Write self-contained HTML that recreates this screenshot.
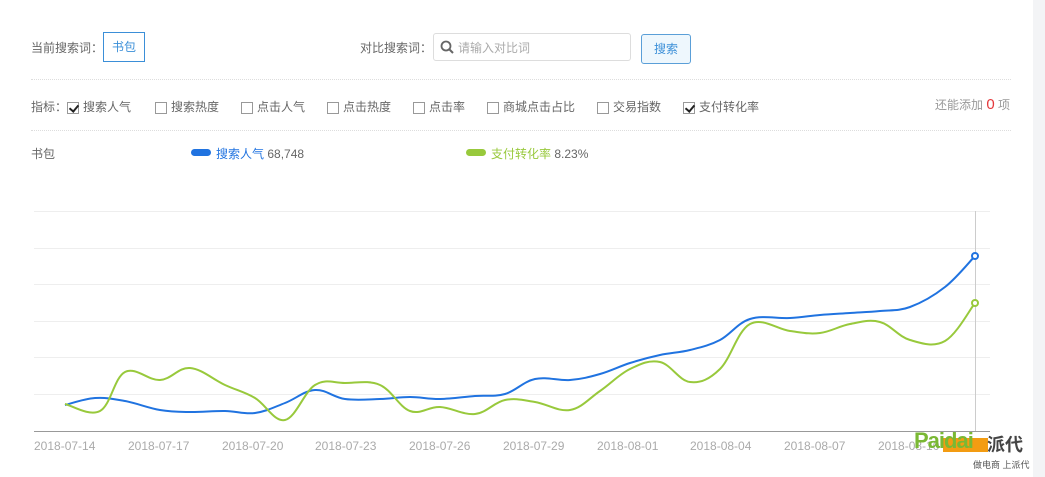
<!DOCTYPE html>
<html><head><meta charset="utf-8"><style>
body{margin:0;width:1045px;height:477px;background:#fff;font-family:"Liberation Sans","Noto Sans CJK SC",sans-serif;font-size:12px;color:#666;position:relative;overflow:hidden}
.a{position:absolute;white-space:nowrap}
.cb{display:inline-block;width:12px;height:12px;border:1px solid #999;vertical-align:-3px;margin-right:4px;background:#fff;position:relative;box-sizing:border-box}
.cb.on:after{content:"";position:absolute;left:3px;top:0px;width:4px;height:7px;border:solid #222;border-width:0 2px 2px 0;transform:rotate(40deg)}
.dash{position:absolute;left:31px;width:980px;border-top:1px dotted #ddd}
.gl{position:absolute;left:34px;width:956px;border-top:1px solid #eee}
</style></head><body>
<div class="a" style="left:1033px;top:0;width:12px;height:477px;background:#f3f4f6"></div>
<div class="a" style="left:31px;top:39px">当前搜索词：</div>
<div class="a" style="left:103px;top:32px;width:40px;height:28px;border:1px solid #3b8fd8;color:#3b8fd8;line-height:28px;text-align:center">书包</div>
<div class="a" style="left:360px;top:39px">对比搜索词：</div>
<div class="a" style="left:433px;top:33px;width:198px;height:28px;border:1px solid #ddd;border-radius:3px;color:#aaa;line-height:28px;box-sizing:border-box;padding-left:24px">请输入对比词</div>
<svg class="a" style="left:440px;top:40px" width="14" height="14"><circle cx="6" cy="6" r="4.5" fill="none" stroke="#666" stroke-width="1.8"/><line x1="9" y1="9" x2="13" y2="13" stroke="#666" stroke-width="2"/></svg>
<div class="a" style="left:641px;top:34px;width:48px;height:28px;border:1px solid #5a9fd8;border-radius:3px;background:#eef7fd;color:#3b8fd8;line-height:28px;text-align:center">搜索</div>
<div class="dash" style="top:79px"></div>
<div class="a" style="left:31px;top:98px">指标：<span class="cb on"></span>搜索人气</div>
<div class="a" style="left:155px;top:98px"><span class="cb"></span>搜索热度</div>
<div class="a" style="left:241px;top:98px"><span class="cb"></span>点击人气</div>
<div class="a" style="left:327px;top:98px"><span class="cb"></span>点击热度</div>
<div class="a" style="left:413px;top:98px"><span class="cb"></span>点击率</div>
<div class="a" style="left:487px;top:98px"><span class="cb"></span>商城点击占比</div>
<div class="a" style="left:597px;top:98px"><span class="cb"></span>交易指数</div>
<div class="a" style="left:683px;top:98px"><span class="cb on"></span>支付转化率</div>
<div class="a" style="left:935px;top:96px;color:#999">还能添加 <span style="color:#e4393c;font-size:15px">0</span> 项</div>
<div class="dash" style="top:130px"></div>
<div class="a" style="left:31px;top:145px">书包</div>
<div class="a" style="left:191px;top:149px;width:20px;height:7px;border-radius:4px;background:#2073e0"></div>
<div class="a" style="left:216px;top:145px"><span style="color:#2073e0">搜索人气</span> 68,748</div>
<div class="a" style="left:466px;top:149px;width:20px;height:7px;border-radius:4px;background:#98c93c"></div>
<div class="a" style="left:491px;top:145px"><span style="color:#98c93c">支付转化率</span> 8.23%</div>
<div class="gl" style="top:211px"></div><div class="gl" style="top:248px"></div><div class="gl" style="top:284px"></div><div class="gl" style="top:321px"></div><div class="gl" style="top:357px"></div><div class="gl" style="top:394px"></div>
<div class="a" style="left:34px;top:431px;width:956px;border-top:1px solid #999"></div>
<div class="a" style="left:975px;top:211px;height:220px;border-left:1px solid #ccc"></div>
<svg class="a" style="left:0;top:0" width="1045" height="477">
<path id="pb" fill="none" stroke="#2073e0" stroke-width="2"/>
<path id="pg" fill="none" stroke="#98c93c" stroke-width="2"/>
<circle cx="975" cy="256" r="3" fill="#fff" stroke="#2073e0" stroke-width="2"/>
<circle cx="975" cy="303" r="3" fill="#fff" stroke="#98c93c" stroke-width="2"/>
</svg>
<script>
function sm(s){var p=s.trim().split(/\s+/).map(function(t){return t.split(',').map(Number)});var d='M'+p[0];for(var i=0;i<p.length-1;i++){var a=p[i-1]||p[i],b=p[i],c=p[i+1],e=p[i+2]||c;var k=0.18;d+=' C'+(b[0]+(c[0]-a[0])*k)+','+(b[1]+(c[1]-a[1])*k)+' '+(c[0]-(e[0]-b[0])*k)+','+(c[1]-(e[1]-b[1])*k)+' '+c[0]+','+c[1];}return d;}
document.getElementById('pb').setAttribute('d',sm("65,405 95,398 125,401 160,410 190,412 225,411 255,413 285,403 315,390 345,399 380,399 410,397 440,399 475,396 505,394 535,379 570,380 600,374 630,363 660,355 690,350 720,340 750,319 790,318 820,315 850,313 880,311 910,307 945,287 975,256"));
document.getElementById('pg').setAttribute('d',sm("65,404 100,411 125,372 160,380 190,368 225,385 255,398 285,420 315,385 345,383 380,385 410,411 440,407 475,414 505,400 535,402 570,410 600,391 630,369 660,362 690,382 720,369 750,324 790,331 820,333 850,324 880,322 910,340 945,341 975,303"));
</script>
<div class="a" style="left:34px;top:439px;color:#aaa">2018-07-14</div>
<div class="a" style="left:128px;top:439px;color:#aaa">2018-07-17</div>
<div class="a" style="left:222px;top:439px;color:#aaa">2018-07-20</div>
<div class="a" style="left:315px;top:439px;color:#aaa">2018-07-23</div>
<div class="a" style="left:409px;top:439px;color:#aaa">2018-07-26</div>
<div class="a" style="left:503px;top:439px;color:#aaa">2018-07-29</div>
<div class="a" style="left:597px;top:439px;color:#aaa">2018-08-01</div>
<div class="a" style="left:690px;top:439px;color:#aaa">2018-08-04</div>
<div class="a" style="left:784px;top:439px;color:#aaa">2018-08-07</div>
<div class="a" style="left:878px;top:439px;color:#aaa">2018-08-10</div>
<div class="a" style="left:943px;top:438px;width:45px;height:14px;background:#f39c12"></div>
<div class="a" style="left:914px;top:428px;color:#7ab834;font-weight:bold;font-size:22px;letter-spacing:-1px">Paidai</div>
<div class="a" style="left:987px;top:431px;color:#444;font-size:18px;font-weight:bold">派代</div>
<div class="a" style="left:973px;top:458px;color:#555;font-size:9px">做电商 上派代</div>
</body></html>
